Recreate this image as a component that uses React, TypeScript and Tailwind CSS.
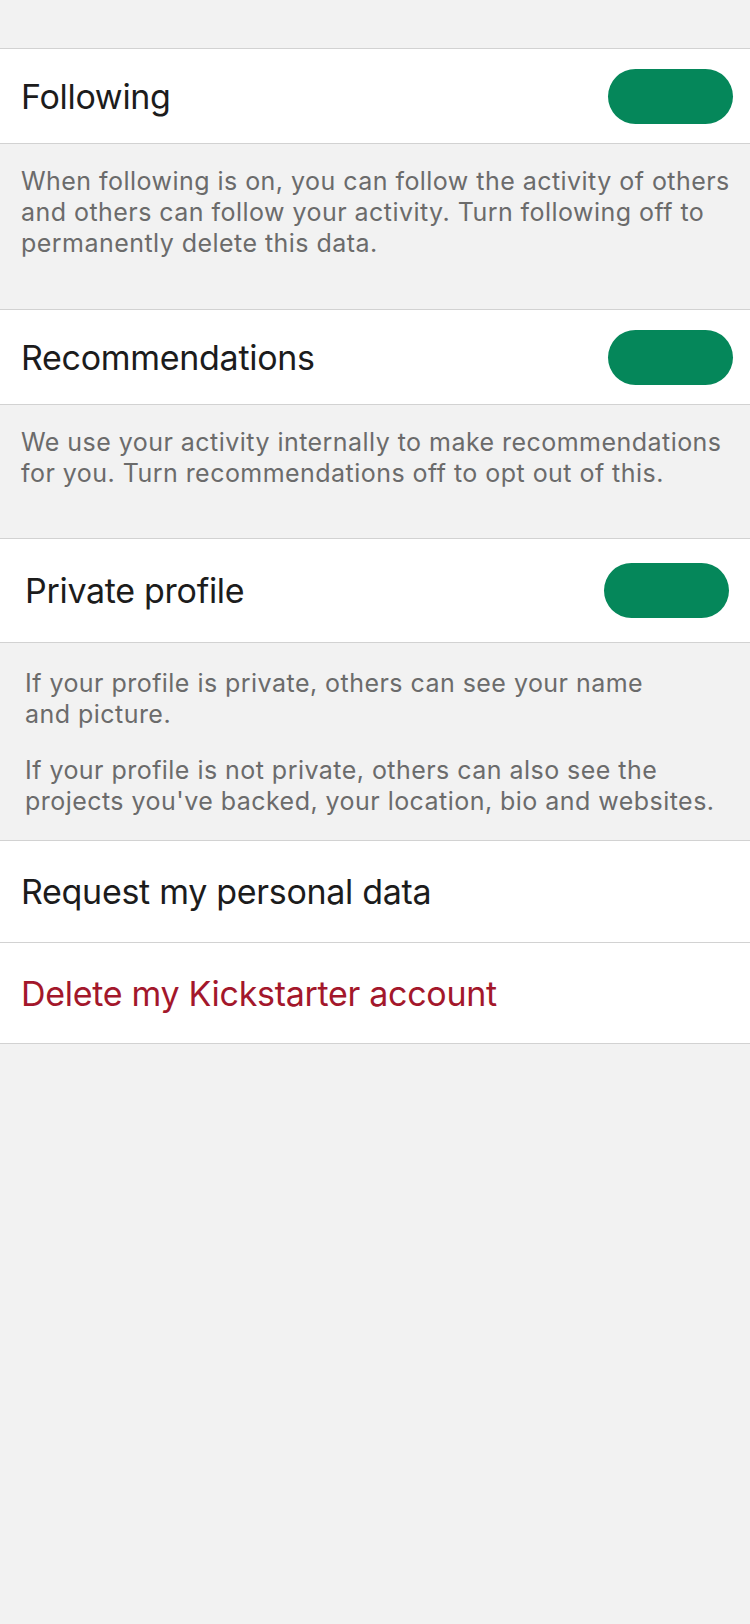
import React from "react";

function Toggle() {
  return <div className="w-[125px] h-[55px] rounded-full bg-[#05875a] shrink-0" />;
}

export default function App() {
  const font = { fontFamily: "Inter, 'Noto Sans', sans-serif" };
  return (
    <div className="w-[750px] min-h-[1624px] bg-[#f2f2f2]" style={font}>
      <div className="h-[48px]" />
      {/* Following */}
      <div className="h-[96px] bg-white border-y border-[#d2d2d2] flex items-center justify-between pl-[21px] pr-[17px]">
        <span className="text-[34px] text-[#1c1c1c] tracking-[-0.3px]">Following</span>
        <Toggle />
      </div>
      <div className="pt-[22px] pb-[50px] pl-[21px] pr-[17px] text-[25px] leading-[31px] text-[#6b6b6b] tracking-[0.46px]">
        When following is on, you can follow the activity of others and others can follow your activity. Turn following off to permanently delete this data.
      </div>
      {/* Recommendations */}
      <div className="h-[96px] bg-white border-y border-[#d2d2d2] flex items-center justify-between pl-[21px] pr-[17px]">
        <span className="text-[34px] text-[#1c1c1c] tracking-[-0.3px]">Recommendations</span>
        <Toggle />
      </div>
      <div className="pt-[22px] pb-[49px] pl-[21px] pr-[17px] text-[25px] leading-[31px] text-[#6b6b6b] tracking-[0.46px]">
        We use your activity internally to make recommendations for you. Turn recommendations off to opt out of this.
      </div>
      {/* Private profile */}
      <div className="h-[105px] bg-white border-y border-[#d2d2d2] flex items-center justify-between pl-[25px] pr-[21px]">
        <span className="text-[34px] text-[#1c1c1c] tracking-[-0.3px]">Private profile</span>
        <Toggle />
      </div>
      <div className="pt-[25px] pb-[23px] pl-[25px] pr-[21px] text-[25px] leading-[31px] text-[#6b6b6b] tracking-[0.46px] flex flex-col gap-[25px]">
        <p>
          If your profile is private, others can see your name
          <br />
          and picture.
        </p>
        <p>If your profile is not private, others can also see the projects you've backed, your location, bio and websites.</p>
      </div>
      {/* Request */}
      <div className="h-[102px] bg-white border-t border-[#d2d2d2] flex items-center pl-[21px]">
        <span className="text-[34px] text-[#1c1c1c] tracking-[-0.3px]">Request my personal data</span>
      </div>
      <div className="h-[102px] bg-white border-y border-[#d2d2d2] flex items-center pl-[21px]">
        <span className="text-[34px] text-[#a3172b] tracking-[-0.3px]">Delete my Kickstarter account</span>
      </div>
    </div>
  );
}
